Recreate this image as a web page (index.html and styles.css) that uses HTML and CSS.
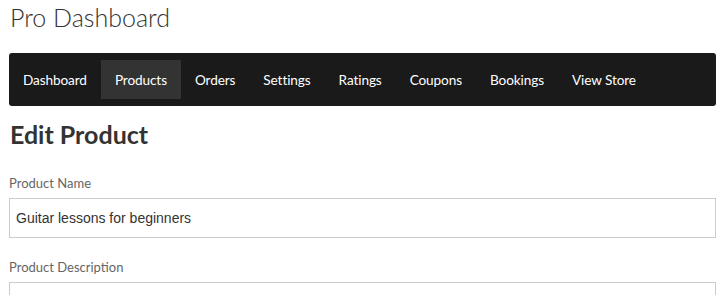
FILE: index.html
```html
<!DOCTYPE html>
<html lang="en">
<head>
    <meta charset="UTF-8">
    <meta name="viewport" content="width=device-width, initial-scale=1.0">
    <title>Pro Dashboard</title>
    <link rel="stylesheet" href="styles.css">
</head>
<body>
    <div class="page">
        <h1 class="site-title">Pro Dashboard</h1>
        <nav class="main-nav">
            <a href="#">Dashboard</a>
            <a href="#" class="active">Products</a>
            <a href="#">Orders</a>
            <a href="#">Settings</a>
            <a href="#">Ratings</a>
            <a href="#">Coupons</a>
            <a href="#">Bookings</a>
            <a href="#">View Store</a>
        </nav>
        <h2 class="page-title">Edit Product</h2>
        <form class="product-form">
            <label for="productName">Product Name</label>
            <input id="productName" type="text" value="Guitar lessons for beginners">
            <label for="productDescription">Product Description</label>
            <textarea id="productDescription" rows="6"></textarea>
        </form>
    </div>
</body>
</html>
```

FILE: styles.css
```css
body {
    font-family: Lato, "Open Sans", sans-serif;
    margin: 0;
    background-color: #fff;
    color: #333;
    overflow: hidden;
}
.page {
    width: 707px;
    padding-left: 9px;
}
.site-title {
    font-weight: 300;
    font-size: 25px;
    color: #333;
    margin: 0;
    padding: 2px 0 0 1px;
    height: 51px;
    line-height: 30px;
}
.main-nav {
    display: flex;
    background-color: #1a1a1a;
    border-radius: 3px;
    padding: 7px 0;
}
.main-nav a {
    color: #fff;
    text-decoration: none;
    font-size: 13.6px;
    letter-spacing: -0.1px;
    padding: 1px 14px 0;
    line-height: 38px;
}
.main-nav a.active {
    background-color: #333;
}
.page-title {
    font-size: 25px;
    font-weight: 700;
    margin: 13px 0 0 1px;
    line-height: 30px;
}
.product-form {
    display: flex;
    flex-direction: column;
    margin-top: 25px;
}
.product-form label {
    font-size: 13px;
    color: #666;
    line-height: 18px;
    margin-bottom: 6px;
}
.product-form input,
.product-form textarea {
    font-family: "Liberation Sans", Arial, sans-serif;
    font-size: 14px;
    color: #333;
    border: 1px solid #ccc;
    padding: 0 6px;
    margin: 0 0 20px;
    box-sizing: border-box;
    width: 100%;
}
.product-form input {
    height: 40px;
}
.product-form textarea {
    height: 120px;
}
```
